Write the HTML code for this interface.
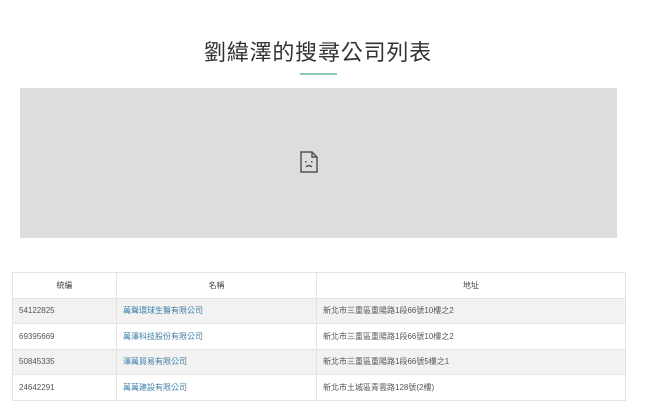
<!DOCTYPE html>
<html><head><meta charset="utf-8"><style>
body{margin:0;width:656px;height:413px;background:#fff;font-family:"Liberation Sans","Noto Sans CJK TC",sans-serif;position:relative;overflow:hidden}
h1{position:absolute;top:37px;left:0;width:636px;text-align:center;margin:0;font-size:22px;font-weight:normal;color:#333;letter-spacing:0.8px;line-height:32px}
.line{position:absolute;left:300px;top:73px;width:37px;height:2px;background:#8fc9b8}
.img{position:absolute;left:20px;top:88px;width:597px;height:150px;background:#dddddd}
table{position:absolute;left:12px;top:272px;width:614px;border-collapse:collapse;font-size:8px;color:#555}
td,th{border:1px solid #e4e4e4;height:24.5px;padding:0 6px;font-weight:normal}
th{text-align:center;color:#444}
tr.s td{background:#f2f2f2}
a{color:#3a7fa8;text-decoration:none}
</style></head><body>
<h1>劉緯澤的搜尋公司列表</h1>
<div class="line"></div>
<div class="img">
<svg style="position:absolute;left:279px;top:63px" width="20" height="22" viewBox="0 0 20 22"><path d="M2 1H13L18 6V21H2Z M13 1V6H18" fill="none" stroke="#555" stroke-width="1.5"/><path d="M7 16Q10 13 13 16" fill="none" stroke="#555" stroke-width="1.3"/><rect x="6" y="10" width="1.5" height="1.5" fill="#555"/><rect x="12" y="10" width="1.5" height="1.5" fill="#555"/></svg>
</div>
<table>
<tr><th style="width:91px">統編</th><th style="width:187px">名稱</th><th>地址</th></tr>
<tr class="s"><td>54122825</td><td><a>萬聲環球生醫有限公司</a></td><td>新北市三重區重陽路1段66號10樓之2</td></tr>
<tr><td>69395669</td><td><a>萬澤科技股份有限公司</a></td><td>新北市三重區重陽路1段66號10樓之2</td></tr>
<tr class="s"><td>50845335</td><td><a>澤萬貿易有限公司</a></td><td>新北市三重區重陽路1段66號5樓之1</td></tr>
<tr><td>24642291</td><td><a>萬萬建設有限公司</a></td><td>新北市土城區青雲路128號(2樓)</td></tr>
</table>
</body></html>
